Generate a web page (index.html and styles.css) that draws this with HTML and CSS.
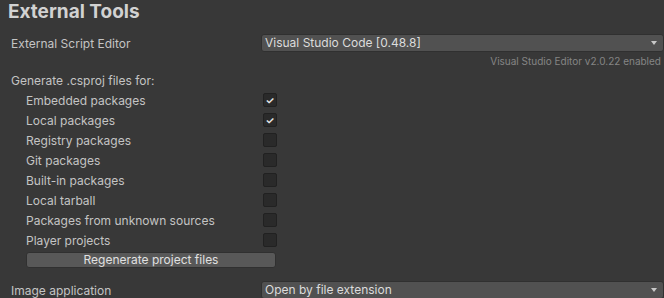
FILE: index.html
```html
<!DOCTYPE html>
<html lang="en">
<head>
    <meta charset="UTF-8">
    <title>External Tools</title>
    <link rel="stylesheet" href="styles.css">
</head>
<body>
    <div class="panel">
        <h1 class="title">External Tools</h1>

        <div class="row editor-row">
            <div class="label">External Script Editor</div>
            <div class="dropdown">
                <span>Visual Studio Code [0.48.8]</span>
                <span class="arrow"></span>
            </div>
        </div>
        <div class="note">Visual Studio Editor v2.0.22 enabled</div>

        <div class="section-label">Generate .csproj files for:</div>
        <div class="checks">
            <div class="row check-row"><div class="label sub">Embedded packages</div><div class="box checked">&#10003;</div></div>
            <div class="row check-row"><div class="label sub">Local packages</div><div class="box checked">&#10003;</div></div>
            <div class="row check-row"><div class="label sub">Registry packages</div><div class="box"></div></div>
            <div class="row check-row"><div class="label sub">Git packages</div><div class="box"></div></div>
            <div class="row check-row"><div class="label sub">Built-in packages</div><div class="box"></div></div>
            <div class="row check-row"><div class="label sub">Local tarball</div><div class="box"></div></div>
            <div class="row check-row"><div class="label sub">Packages from unknown sources</div><div class="box"></div></div>
            <div class="row check-row"><div class="label sub">Player projects</div><div class="box"></div></div>
        </div>
        <button class="regen">Regenerate project files</button>

        <div class="row image-row">
            <div class="label">Image application</div>
            <div class="dropdown">
                <span>Open by file extension</span>
                <span class="arrow"></span>
            </div>
        </div>
    </div>
</body>
</html>
```

FILE: styles.css
```css
/* Unity-like dark preferences panel */
body {
    margin: 0;
    background-color: #383838;
    color: #c4c4c4;
    font-family: Inter, "Noto Sans", sans-serif;
    font-size: 12px;
    overflow: hidden;
}

.panel {
    width: 664px;
}

.title {
    margin: 0;
    padding-left: 8px;
    height: 28px;
    line-height: 23px;
    font-size: 19px;
    font-weight: bold;
    color: #d2d2d2;
}

.row {
    display: flex;
    align-items: center;
}

.label {
    width: 250px;
    padding-left: 11px;
}

.label.sub {
    width: 236px;
    padding-left: 26px;
}

.editor-row {
    margin-top: 6px;
    height: 18px;
}

.dropdown {
    width: 398px;
    height: 16px;
    display: flex;
    align-items: center;
    justify-content: space-between;
    background-color: #515151;
    border: 1px solid #303030;
    border-radius: 3px;
    color: #dcdcdc;
    padding: 0 0 0 3px;
    box-sizing: content-box;
}

.dropdown span:first-child {
    line-height: 16px;
}

.arrow {
    width: 0;
    height: 0;
    margin-right: 6px;
    border-left: 3.5px solid transparent;
    border-right: 3.5px solid transparent;
    border-top: 4px solid #c8c8c8;
}

.note {
    height: 16px;
    margin-top: 2px;
    padding-right: 3px;
    line-height: 14px;
    text-align: right;
    font-size: 10px;
    color: #858585;
}

.section-label {
    height: 20px;
    line-height: 22px;
    padding-left: 11px;
}

.check-row {
    height: 20px;
}

.box {
    width: 12px;
    height: 12px;
    margin-left: 1px;
    background-color: #2a2a2a;
    border: 1px solid #212121;
    border-radius: 2px;
    color: #e8e8e8;
    font-size: 10px;
    font-weight: bold;
    line-height: 12px;
    text-align: center;
}

.regen {
    display: block;
    margin: 2px 0 0 26px;
    width: 250px;
    height: 16px;
    padding: 0;
    background-color: #585858;
    border: 1px solid #303030;
    border-radius: 3px;
    color: #e0e0e0;
    font-family: Inter, "Noto Sans", sans-serif;
    font-size: 12px;
    line-height: 14px;
}

.image-row {
    margin-top: 13px;
    height: 18px;
}
```
